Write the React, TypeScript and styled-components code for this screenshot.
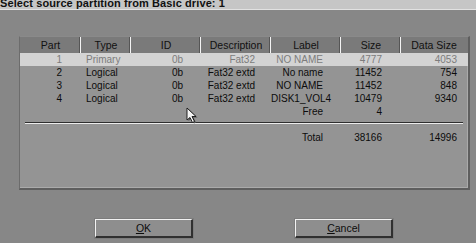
import styled, { createGlobalStyle } from 'styled-components';

const GlobalStyle = createGlobalStyle`
  html, body {
    margin: 0;
    padding: 0;
    background: #878787;
    width: 476px;
    height: 243px;
    overflow: hidden;
    font-family: 'Liberation Sans', Arial, sans-serif;
  }
`;

const Screen = styled.div`
  position: relative;
  width: 476px;
  height: 243px;
  display: flex;
  flex-direction: column;
`;

const TitleBar = styled.div`
  height: 9px;
  background: #c6c6c6;
  border-bottom: 1px solid #e2e2e2;
  overflow: hidden;
  white-space: nowrap;
`;

const TitleText = styled.div`
  margin: -3px 0 0 0;
  font-size: 11px;
  line-height: 12px;
  font-weight: 700;
  letter-spacing: 0.1px;
  color: #111;
`;

const Panel = styled.div`
  margin: 26px 0 0 19px;
  width: 448px;
  height: 151px;
  background: #949494;
  border-left: 1px solid #6c6c6c;
  border-top: 1px solid #8a8a8a;
  border-right: 2px solid #5e5e5e;
  border-bottom: 2px solid #5e5e5e;
  box-shadow: inset -1px -1px 0 #aaaaaa;
  display: flex;
  flex-direction: column;
`;

const cols = '61px 50px 70px 70px 70px 60px 66px';

const HeaderRow = styled.div`
  display: grid;
  grid-template-columns: ${cols};
  height: 16px;
  background: #7a7a7a;
`;

const HeaderCell = styled.div<{ $last?: boolean }>`
  font-size: 10.5px;
  line-height: 16px;
  color: #111;
  text-align: center;
  box-shadow: ${p => (p.$last ? 'none' : 'inset -1px 0 0 #f4f4f4, inset -2px 0 0 #555')};
`;

const DataRow = styled.div<{ $selected?: boolean }>`
  display: grid;
  grid-template-columns: ${cols};
  height: 13px;
  background: ${p => (p.$selected ? '#d3d3d3' : 'transparent')};
  color: ${p => (p.$selected ? '#7c7c7c' : '#0c0c0c')};
`;

const Cell = styled.div<{ $align: 'left' | 'right'; $pad: number }>`
  font-size: 10px;
  line-height: 13px;
  white-space: nowrap;
  text-align: ${p => p.$align};
  ${p => (p.$align === 'left' ? `padding-left: ${p.$pad}px;` : `padding-right: ${p.$pad}px;`)}
`;

const Separator = styled.div`
  margin: 4px 5px 0 5px;
  height: 0;
  border-top: 1px solid #2e2e2e;
  border-bottom: 1px solid #ececec;
`;

const TotalRow = styled(DataRow)`
  margin-top: 7px;
`;

const ButtonBar = styled.div`
  display: flex;
  gap: 102px;
  margin: 29px 0 0 95px;
`;

const Button = styled.button`
  width: 98px;
  height: 19px;
  padding: 0;
  background: #8e8e8e;
  border-top: 1px solid #f2f2f2;
  border-left: 1px solid #f2f2f2;
  border-right: 2px solid #303030;
  border-bottom: 2px solid #303030;
  outline: 1px solid #7c7c7c;
  font-family: 'Liberation Sans', Arial, sans-serif;
  font-size: 10.5px;
  color: #0c0c0c;
  cursor: pointer;

  u {
    text-underline-offset: 1px;
  }
`;

const Cursor = styled.svg`
  position: absolute;
  left: 185px;
  top: 107px;
`;

const headers = ['Part', 'Type', 'ID', 'Description', 'Label', 'Size', 'Data Size'];

const aligns: { align: 'left' | 'right'; pad: number }[] = [
  { align: 'right', pad: 19 },
  { align: 'left', pad: 5 },
  { align: 'right', pad: 18 },
  { align: 'right', pad: 16 },
  { align: 'right', pad: 18 },
  { align: 'right', pad: 19 },
  { align: 'right', pad: 10 },
];

const partitions = [
  ['1', 'Primary', '0b', 'Fat32', 'NO NAME', '4777', '4053'],
  ['2', 'Logical', '0b', 'Fat32 extd', 'No name', '11452', '754'],
  ['3', 'Logical', '0b', 'Fat32 extd', 'NO NAME', '11452', '848'],
  ['4', 'Logical', '0b', 'Fat32 extd', 'DISK1_VOL4', '10479', '9340'],
  ['', '', '', '', 'Free', '4', ''],
];

const totals = ['', '', '', '', 'Total', '38166', '14996'];

export default function App() {
  return (
    <Screen>
      <GlobalStyle />
      <TitleBar>
        <TitleText>Select source partition from Basic drive: 1</TitleText>
      </TitleBar>

      <Panel>
        <HeaderRow>
          {headers.map((h, i) => (
            <HeaderCell key={h} $last={i === headers.length - 1}>
              {h}
            </HeaderCell>
          ))}
        </HeaderRow>

        {partitions.map((row, r) => (
          <DataRow key={r} $selected={r === 0}>
            {row.map((v, i) => (
              <Cell key={i} $align={aligns[i].align} $pad={aligns[i].pad}>
                {v}
              </Cell>
            ))}
          </DataRow>
        ))}

        <Separator />

        <TotalRow>
          {totals.map((v, i) => (
            <Cell key={i} $align={aligns[i].align} $pad={aligns[i].pad}>
              {v}
            </Cell>
          ))}
        </TotalRow>
      </Panel>

      <ButtonBar>
        <Button>
          <u>O</u>K
        </Button>
        <Button>
          <u>C</u>ancel
        </Button>
      </ButtonBar>

      {/* mouse pointer left over the list */}
      <Cursor width="17" height="17" viewBox="0 0 17 17">
        <path d="M2 1 L2 13 L5 10.5 L7.5 15.5 L9.5 14.5 L7 9.5 L11 9.5 Z" fill="#555" transform="translate(1.5 1)" />
        <path d="M2 1 L2 13 L5 10.5 L7.5 15.5 L9.5 14.5 L7 9.5 L11 9.5 Z" fill="#f4f4f4" stroke="#111" strokeWidth="0.9" strokeLinejoin="round" />
      </Cursor>
    </Screen>
  );
}
